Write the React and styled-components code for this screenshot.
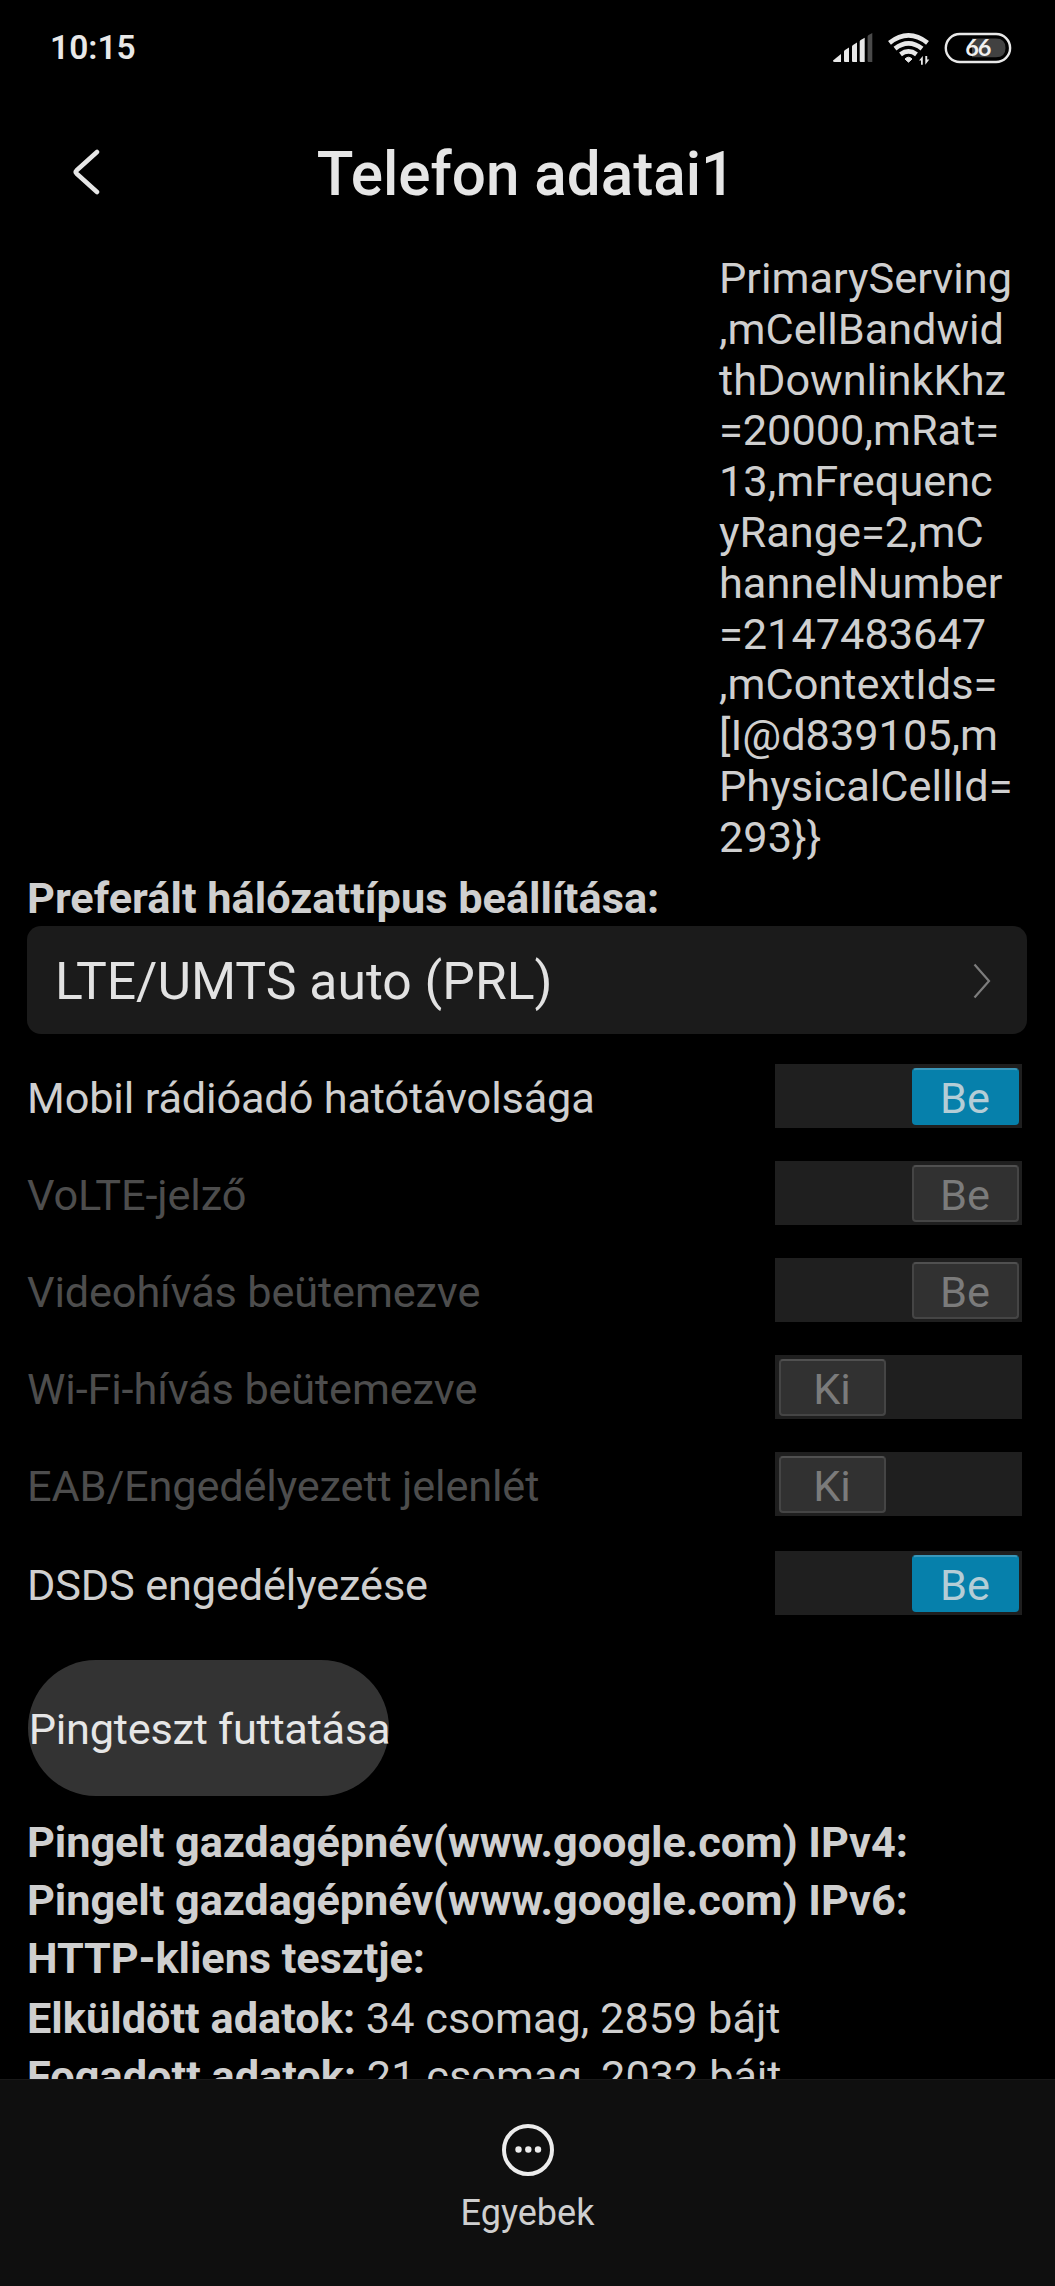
import React, { useState } from 'react';
import styled, { createGlobalStyle } from 'styled-components';

const GlobalStyle = createGlobalStyle`
  body {
    margin: 0;
    background: #000;
  }
`;

const Screen = styled.div`
  display: flex;
  flex-direction: column;
  width: 1055px;
  height: 2286px;
  overflow: hidden;
  background: #000;
  color: #cfcfcf;
  font-family: Roboto, sans-serif;
  font-size: 43.3px;
  white-space: nowrap;
`;

const StatusBar = styled.div`
  display: flex;
  flex: none;
  align-items: center;
  justify-content: space-between;
  height: 97px;
  padding: 0 43px 0 50px;
  box-sizing: border-box;
`;

const Clock = styled.span`
  margin-top: -2px;
  color: #e8e8e8;
  font-size: 33.5px;
  font-weight: 600;
`;

const StatusIcons = styled.div`
  display: flex;
  align-items: center;
  margin-top: -2px;

  svg {
    display: block;
  }
`;

const Header = styled.header`
  display: grid;
  grid-template-columns: 170px 1fr 170px;
  align-items: center;
  flex: none;
  height: 155px;
`;

const BackButton = styled.button`
  margin: -6px 0 0;
  padding: 0 0 0 71px;
  border: none;
  background: transparent;
  text-align: left;

  svg {
    display: block;
  }
`;

const Title = styled.h1`
  margin: 0;
  color: #e6e6e6;
  font-size: 60.2px;
  font-weight: 500;
  text-align: center;
  padding-right: 3px;
`;

const Content = styled.main`
  flex: 1;
  min-height: 0;
  overflow: hidden;
  padding: 2px 28px 0 27px;
`;

const ConfigValue = styled.div`
  width: 310px;
  margin-left: 692px;
  line-height: 50.8px;
`;

const SectionLabel = styled.div`
  margin-top: 9px;
  line-height: 51px;
  font-weight: 700;
`;

const Select = styled.div`
  display: flex;
  align-items: center;
  justify-content: space-between;
  height: 108px;
  margin-top: 2px;
  padding: 3px 36px 0 28px;
  box-sizing: border-box;
  border-radius: 14px;
  background: #1b1b1b;
  color: #e2e2e2;
  font-size: 51.7px;
`;

const ToggleList = styled.div`
  padding-top: 14px;
`;

const ToggleRow = styled.div`
  display: flex;
  align-items: center;
  justify-content: space-between;
  height: 97px;
  padding-right: 5px;
  color: ${(props) => (props.$disabled ? '#4d4d4d' : '#cfcfcf')};

  &:last-child {
    margin-top: 2px;
  }
`;

const ToggleLabel = styled.span`
  padding-top: 5px;
  letter-spacing: -0.15px;
`;

const Track = styled.button`
  display: flex;
  justify-content: ${(props) => (props.$on ? 'flex-end' : 'flex-start')};
  width: 247px;
  height: 64px;
  padding: 3.5px;
  box-sizing: border-box;
  border: none;
  background: #1f1f1f;
  font: inherit;
`;

const Thumb = styled.span`
  display: flex;
  align-items: center;
  justify-content: center;
  width: 107px;
  height: 57px;
  padding-top: 4px;
  box-sizing: border-box;
  border: 2px solid ${(props) => (props.$active ? '#0680ab' : '#454545')};
  border-top-color: ${(props) => (props.$active ? '#3a97ba' : '#505050')};
  border-radius: 4px;
  background: ${(props) => (props.$active ? '#0680ab' : '#313131')};
  color: ${(props) => (props.$active ? '#b4cdd6' : '#7b7b7b')};
`;

const PingButton = styled.button`
  display: flex;
  align-items: center;
  justify-content: center;
  width: 361px;
  height: 136px;
  margin: 28px 0 0 1px;
  padding: 4px 0 0 2px;
  border: none;
  border-radius: 68px;
  background: #333;
  color: #e6e6e6;
  font: inherit;
  letter-spacing: -0.25px;
`;

const Results = styled.div`
  margin-top: 18px;
`;

const ResultLine = styled.div`
  line-height: 58px;
  margin-top: ${(props) => (props.$gap ? '2.5px' : '0')};
  letter-spacing: ${(props) => (props.$wide ? '0' : '-0.08px')};
`;

const BottomBar = styled.footer`
  display: flex;
  flex: none;
  flex-direction: column;
  align-items: center;
  height: 207px;
  padding-top: 43px;
  box-sizing: border-box;
  border-top: 1px solid #191919;
  background: #0f0f0f;
  font-size: 36px;
`;

const MoreLabel = styled.span`
  margin-top: 15px;
  line-height: 42px;
`;

const configLines = [
  'PrimaryServing',
  ',mCellBandwid',
  'thDownlinkKhz',
  '=20000,mRat=',
  '13,mFrequenc',
  'yRange=2,mC',
  'hannelNumber',
  '=2147483647',
  ',mContextIds=',
  '[I@d839105,m',
  'PhysicalCellId=',
  '293}}',
];

const initialToggles = [
  { label: 'Mobil rádióadó hatótávolsága', on: true },
  { label: 'VoLTE-jelző', on: true, disabled: true },
  { label: 'Videohívás beütemezve', on: true, disabled: true },
  { label: 'Wi-Fi-hívás beütemezve', on: false, disabled: true },
  { label: 'EAB/Engedélyezett jelenlét', on: false, disabled: true },
  { label: 'DSDS engedélyezése', on: true },
];

const results = [
  { label: 'Pingelt gazdagépnév(www.google.com) IPv4:' },
  { label: 'Pingelt gazdagépnév(www.google.com) IPv6:' },
  { label: 'HTTP-kliens tesztje:' },
  { label: 'Elküldött adatok:', value: '34 csomag, 2859 bájt', gap: true },
  { label: 'Fogadott adatok:', value: '21 csomag, 2032 bájt' },
];

function SignalIcons() {
  return (
    <svg width="180" height="34" viewBox="832 30 180 34">
      {/* mobile signal */}
      <g fill="#e8e8e8">
        <path d="M833 59.5 L841 53 V61 H834.5 Q833 61 833 59.5Z" />
        <path d="M844 50.5 Q844 49.5 845 49 L849 46.5 V61 H845 Q844 61 844 60Z" />
        <path d="M852 45.5 Q852 44.5 853 44 L857 41.5 V61 H853 Q852 61 852 60Z" />
        <path d="M859.7 40.5 Q859.7 39.5 860.7 39 L864.7 36.8 V61 H860.7 Q859.7 61 859.7 60Z" />
        <path
          fill="#4a4a4a"
          d="M867.6 35.5 Q867.6 34.5 868.6 34 L872.3 32 V61 H868.6 Q867.6 61 867.6 60Z"
        />
      </g>
      {/* wifi */}
      <g fill="none" stroke="#e8e8e8" strokeWidth="4.7">
        <path d="M889.5 41.8 Q908.5 27 927.5 41.8" />
        <path d="M895 47.6 Q908.5 37.2 922 47.6" />
        <path d="M900.5 53.3 Q908.5 47.4 916.5 53.3" />
      </g>
      <path d="M908.5 61.2 L905 58 Q908.5 54.4 912 58Z" fill="#e8e8e8" stroke="#e8e8e8" />
      <path
        d="M919 59.5 L922.8 55 V63.7 H921 V59.5Z M929.3 58.5 L925.3 63.7 V55 H927.2 V58.5Z"
        fill="#e8e8e8"
      />
      {/* battery */}
      <rect x="945.8" y="33" width="64.300" height="28" rx="14" fill="none" stroke="#e8e8e8" strokeWidth="2.4" />
      <path d="M972 37.5 H996 Q1005.5 37.5 1005.5 47 Q1005.5 56.3 996 56.3 H972Z" fill="#414141" />
      <text
        x="977.8"
        y="55.3"
        textAnchor="middle"
        fontFamily="Lato, sans-serif"
        fontWeight="700"
        fontSize="23.5"
        letterSpacing="-1"
        fill="#f0f0f0"
      >
        66
      </text>
    </svg>
  );
}

function App() {
  const [toggles, setToggles] = useState(initialToggles);

  const handleToggle = (index) => {
    setToggles(toggles.map((t, i) => (i === index ? { ...t, on: !t.on } : t)));
  };

  return (
    <Screen>
      <GlobalStyle />
      <StatusBar>
        <Clock>10:15</Clock>
        <StatusIcons>
          <SignalIcons />
        </StatusIcons>
      </StatusBar>

      <Header>
        <BackButton aria-label="Vissza">
          <svg width="30" height="46" viewBox="0 0 30 46" fill="none" stroke="#e6e6e6" strokeWidth="4.5">
            <path d="M26 3 L5.5 21.5 Q4 23 5.5 24.5 L26 43" strokeLinecap="round" />
          </svg>
        </BackButton>
        <Title>Telefon adatai1</Title>
      </Header>

      <Content>
        <ConfigValue>
          {configLines.map((line) => (
            <div key={line}>{line}</div>
          ))}
        </ConfigValue>

        <SectionLabel>Preferált hálózattípus beállítása:</SectionLabel>
        <Select>
          LTE/UMTS auto (PRL)
          <svg width="19" height="37" viewBox="0 0 19 37" fill="none" stroke="#7d7d7d" strokeWidth="2.2">
            <path d="M2.5 1.5 L17 18 L2.5 34.5" />
          </svg>
        </Select>

        <ToggleList>
          {toggles.map((toggle, index) => (
            <ToggleRow key={toggle.label} $disabled={toggle.disabled}>
              <ToggleLabel>{toggle.label}</ToggleLabel>
              <Track $on={toggle.on} disabled={toggle.disabled} onClick={() => handleToggle(index)}>
                <Thumb $active={toggle.on && !toggle.disabled}>{toggle.on ? 'Be' : 'Ki'}</Thumb>
              </Track>
            </ToggleRow>
          ))}
        </ToggleList>

        <PingButton>Pingteszt futtatása</PingButton>

        <Results>
          {results.map((item) => (
            <ResultLine key={item.label} $gap={item.gap} $wide={Boolean(item.value)}>
              <b>{item.label}</b> {item.value}
            </ResultLine>
          ))}
        </Results>
      </Content>

      <BottomBar>
        <svg width="54" height="54" viewBox="0 0 54 54">
          <circle cx="27" cy="27" r="24" fill="none" stroke="#ececec" strokeWidth="4" />
          <g fill="#ececec">
            <circle cx="17.5" cy="26.5" r="3.2" />
            <circle cx="27.3" cy="26.5" r="3.2" />
            <circle cx="37" cy="26.5" r="3.2" />
          </g>
        </svg>
        <MoreLabel>Egyebek</MoreLabel>
      </BottomBar>
    </Screen>
  );
}

export default App;
